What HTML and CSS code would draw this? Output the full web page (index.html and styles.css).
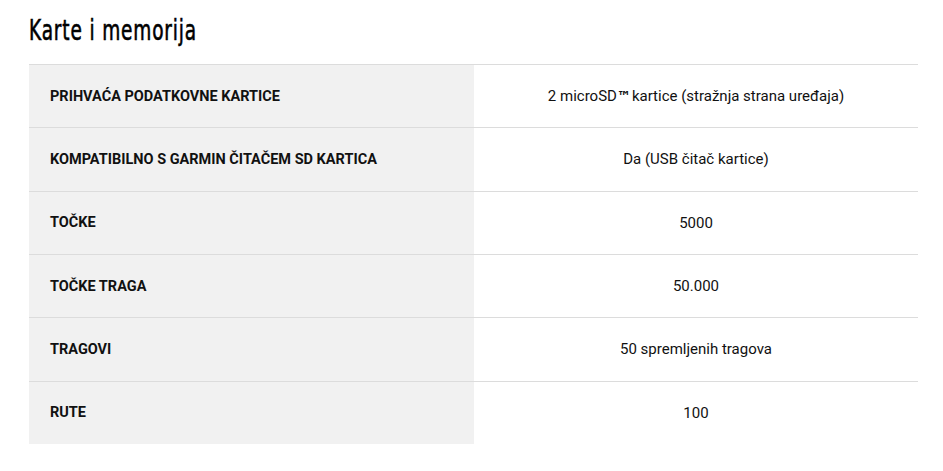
FILE: index.html
```html
<!DOCTYPE html>
<html lang="hr">
<head>
<meta charset="utf-8">
<link rel="stylesheet" href="styles.css">
</head>
<body>
<section class="specs">
  <h2 class="title"><span class="title-text">Karte i memorija</span></h2>
  <div class="table">
    <div class="row"><div class="label">PRIHVAĆA PODATKOVNE KARTICE</div><div class="value"><span>2 microSD<span class="tm">™</span>kartice (stražnja strana uređaja)</span></div></div>
    <div class="row"><div class="label">KOMPATIBILNO S GARMIN ČITAČEM SD KARTICA</div><div class="value"><span>Da (USB čitač kartice)</span></div></div>
    <div class="row"><div class="label">TOČKE</div><div class="value"><span>5000</span></div></div>
    <div class="row"><div class="label">TOČKE TRAGA</div><div class="value"><span>50.000</span></div></div>
    <div class="row"><div class="label">TRAGOVI</div><div class="value"><span>50 spremljenih tragova</span></div></div>
    <div class="row"><div class="label">RUTE</div><div class="value"><span>100</span></div></div>
  </div>
</section>
</body>
</html>
```
FILE: styles.css
```css
html, body {
  margin: 0;
  padding: 0;
  background: #fff;
}
body {
  font-family: Roboto, "Liberation Sans", sans-serif;
  color: #111;
}
.specs {
  padding: 0 25px 0 29px;
}
.title {
  margin: 0;
  height: 64px;
  padding-top: 13px;
  box-sizing: border-box;
  font-family: "DejaVu Sans Condensed", "DejaVu Sans", sans-serif;
  font-stretch: condensed;
  font-weight: normal;
  font-size: 29px;
  line-height: 34px;
  color: #000;
  -webkit-text-stroke: 0.6px #000;
}
.title-text {
  display: inline-block;
  transform-origin: left center;
  transform: scaleX(0.71);
  letter-spacing: 1.2px;
}
.table {
  display: flex;
  flex-direction: column;
}
.row {
  display: grid;
  grid-template-columns: 445px 1fr;
  height: 63.33px;
  box-sizing: border-box;
  border-top: 1px solid #dcdcdc;
}
.label {
  background: #f1f1f1;
  display: flex;
  align-items: center;
  padding-left: 21px;
  font-size: 14.5px;
  font-weight: 700;
  color: #111;
}
.value {
  display: flex;
  align-items: center;
  justify-content: center;
  font-size: 15px;
  color: #111;
}
.tm {
  font-family: "DejaVu Sans", sans-serif;
  font-weight: 700;
  font-size: 14px;
  margin-right: 1px;
}
```
